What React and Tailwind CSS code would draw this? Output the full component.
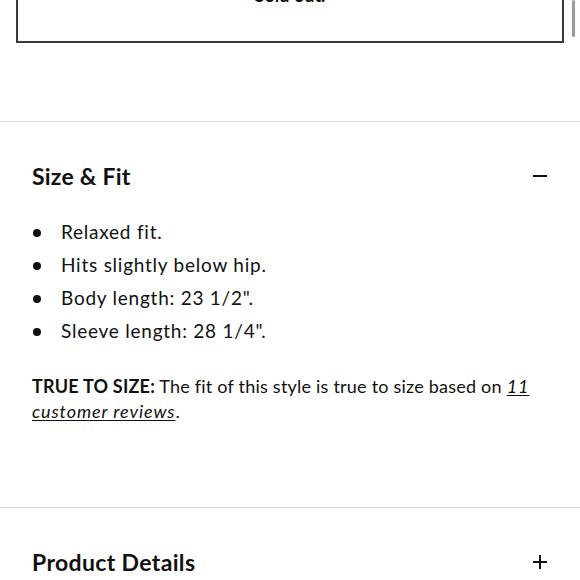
export default function App() {
  const bullets = [
    'Relaxed fit.',
    'Hits slightly below hip.',
    'Body length: 23 1/2".',
    'Sleeve length: 28 1/4".',
  ];

  return (
    <div className="relative w-[580px] h-[580px] overflow-hidden bg-white text-[#111] font-['Lato',sans-serif]">
      {/* scroll indicator */}
      <div className="absolute right-[5px] top-0 w-[3px] h-[37px] rounded-full bg-[#9a9a9a]" />

      {/* Sold out button (cut off) */}
      <div className="mx-4 -mt-[41px] h-[84px] border-2 border-[#3a3a3a] pt-[22px] text-center text-[18px] leading-6 font-bold">
        Sold out.
      </div>

      {/* Size & Fit */}
      <div className="mt-[78px] border-t border-[#dcdcdc] px-8 pt-[40px] pb-[83px]">
        <div className="flex items-center justify-between">
          <h3 className="text-[23px] leading-7 font-bold tracking-[0.01em]">Size &amp; Fit</h3>
          <span className="mr-[1px] w-[14px] h-[2px] bg-[#111]" />
        </div>

        <ul className="mt-[26px]">
          {bullets.map((b) => (
            <li key={b} className="flex items-center h-[33px] text-[19px] tracking-[0.04em]">
              <span className="ml-[1px] w-2 h-2 rounded-full bg-[#111]" />
              <span className="ml-[20px]">{b}</span>
            </li>
          ))}
        </ul>

        <p className="mt-[26px] text-[18px] leading-[25px] tracking-[0.012em]">
          <span className="font-bold">TRUE TO SIZE:</span> The fit of this style is true to size based on{' '}
          <a className="italic underline underline-offset-2 tracking-[0.05em]">11 customer reviews</a>.
        </p>
      </div>

      {/* Product Details */}
      <div className="border-t border-[#dcdcdc] px-8 pt-[40px]">
        <div className="flex items-center justify-between">
          <h3 className="text-[23px] leading-7 font-bold tracking-[0.015em]">Product Details</h3>
          <span className="relative mr-[1px] w-[14px] h-[14px]">
            <span className="absolute left-0 top-[6px] w-[14px] h-[2px] bg-[#111]" />
            <span className="absolute left-[6px] top-0 w-[2px] h-[14px] bg-[#111]" />
          </span>
        </div>
      </div>
    </div>
  );
}
